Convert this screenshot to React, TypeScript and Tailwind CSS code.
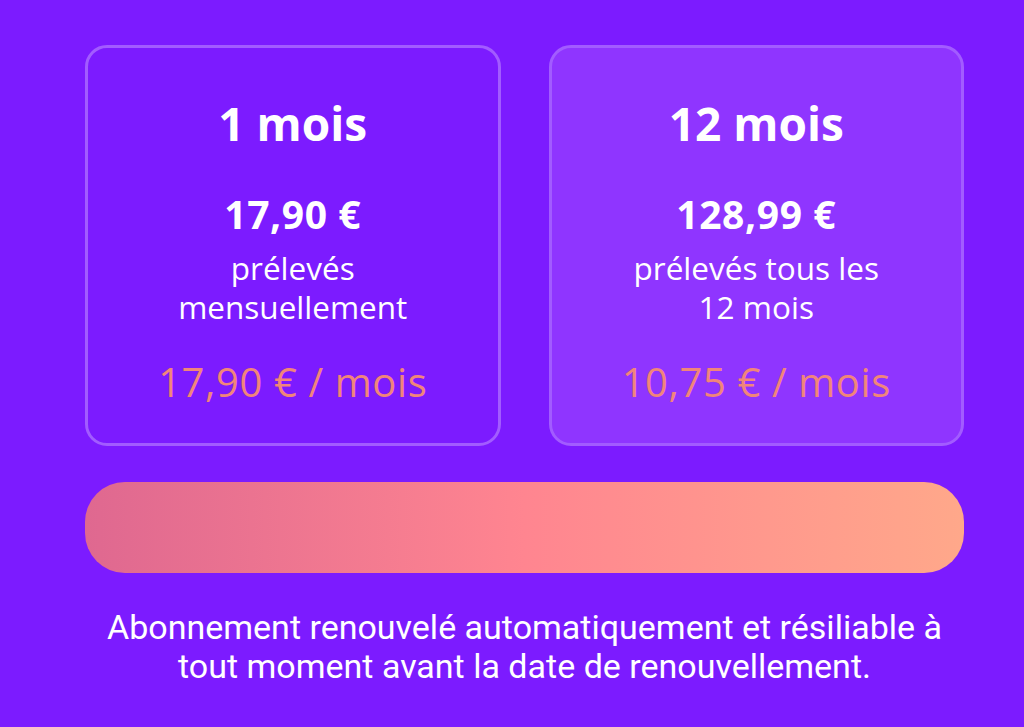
import React from "react";

const Card = ({
  title,
  price,
  sub1,
  sub2,
  monthly,
  highlighted,
}: {
  title: string;
  price: string;
  sub1: string;
  sub2: string;
  monthly: string;
  highlighted?: boolean;
}) => (
  <div
    className={`flex-1 h-[401px] rounded-[22px] border-[3px] border-[#a25cff] flex flex-col items-center text-center ${
      highlighted ? "bg-[#8f35ff]" : "bg-[#7c1bff]"
    }`}
  >
    <div className="mt-[47px] h-[56px] leading-[56px] text-[46px] font-bold text-white">{title}</div>
    <div className="mt-[41px] h-[44px] leading-[44px] text-[39px] tracking-[0.6px] font-bold text-white">{price}</div>
    <div className="mt-[12px] text-[31.5px] leading-[39px] text-white">
      <div>{sub1}</div>
      <div>{sub2}</div>
    </div>
    <div className="mt-[32px] h-[48px] leading-[48px] text-[40px] tracking-[0.6px] text-[#f1857a]">{monthly}</div>
  </div>
);

export default function App() {
  return (
    <div
      className="w-[1024px] h-[727px] bg-[#7c1bff] overflow-hidden pt-[45px] pl-[85px] pr-[60px]"
      style={{ fontFamily: '"Open Sans", sans-serif' }}
    >
      <div className="flex gap-[48px]">
        <Card title="1 mois" price="17,90 €" sub1="prélevés" sub2="mensuellement" monthly="17,90 € / mois" />
        <Card
          title="12 mois"
          price="128,99 €"
          sub1="prélevés tous les"
          sub2="12 mois"
          monthly="10,75 € / mois"
          highlighted
        />
      </div>
      <div className="mt-[36px] h-[91px] rounded-[40px] bg-gradient-to-r from-[#df6890] via-[#ff8590] to-[#ffa88a]" />
      <div
        className="mt-[35px] -ml-[40px] -mr-[40px] text-center text-white text-[34px] leading-[39px]"
        style={{ fontFamily: 'Roboto, sans-serif' }}
      >
        Abonnement renouvelé automatiquement et résiliable à<br />
        tout moment avant la date de renouvellement.
      </div>
    </div>
  );
}
